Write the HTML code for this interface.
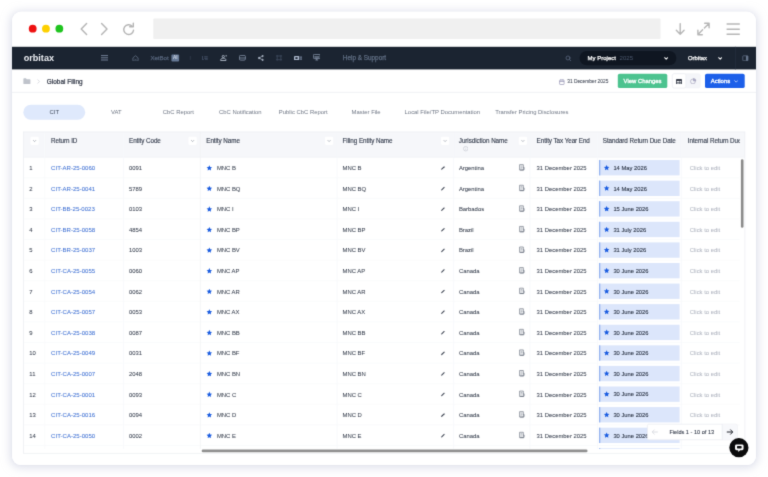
<!DOCTYPE html>
<html lang="en">
<head>
<meta charset="utf-8">
<title>Orbitax Global Filing</title>
<style>
*{box-sizing:border-box;margin:0;padding:0}
html,body{width:768px;height:477px;overflow:hidden;background:#fff;font-family:"Liberation Sans",sans-serif}
body{position:relative;filter:url(#soft)}
#root{position:absolute;left:0;top:0;width:768px;height:477px}
.abs{position:absolute}
.shadow{position:absolute;left:12px;top:12px;width:744px;height:453px;border-radius:9px;background:#fff;box-shadow:0 0 0 0.5px rgba(225,227,238,.5),0 1px 9px 2px rgba(192,196,218,.5)}
#bg{position:absolute;left:0;top:0;width:768px;height:477px}
.logo{position:absolute;left:23.7px;top:53.1px;font-size:9.1px;font-weight:bold;color:#eef0f4;line-height:11px}
.navtxt{position:absolute;color:#5f6d82;font-size:6.3px;line-height:8px;white-space:nowrap;-webkit-text-stroke:0.25px currentColor}
.t{position:absolute;white-space:nowrap;line-height:8px;font-size:6.4px;color:#2b3342}
.tabs{position:absolute;left:23.3px;top:104.8px;height:15px;display:flex}
.tab{min-width:62px;padding:0 7.5px;height:15px;line-height:15px;text-align:center;font-size:5.9px;color:#6e7684;white-space:nowrap}
.tab.on{color:#3f4a5c}
#tblin{position:absolute;left:0;top:0;width:768px;height:477px;clip-path:inset(132px 28.200px 28px 23.600px)}
.h{position:absolute;top:137px;font-size:6.3px;letter-spacing:-0.07px;line-height:8px;color:#363e4e;white-space:nowrap;-webkit-text-stroke:0.14px #363e4e}
.row{position:absolute;left:0;width:768px;height:20.585px}
.c{position:absolute;top:6.6px;font-size:5.9px;line-height:8px;color:#363e4d;white-space:nowrap;-webkit-text-stroke:0.05px currentColor}
.idx{left:29.3px}
.rid{left:51.1px;color:#4172d4;font-size:6.05px}
.code{left:129px}
.en{left:216.9px}
.fen{left:342.5px}
.jur{left:458.9px}
.tye{left:536.5px}
.dd{left:613.4px;top:6.5px;font-size:5.8px;color:#2b3445;-webkit-text-stroke:0.1px #2b3445}
.cte{left:689.8px;color:#b2b7c2}
</style>
</head>
<body>
<svg width="0" height="0" style="position:absolute"><filter id="soft" x="0" y="0" width="100%" height="100%" color-interpolation-filters="sRGB"><feConvolveMatrix order="3" kernelMatrix="0.0156 0.0938 0.0156 0.0938 0.5625 0.0938 0.0156 0.0938 0.0156" edgeMode="duplicate" preserveAlpha="true"/></filter></svg>
<div id="root">
<div class="shadow"></div>
<svg id="bg" viewBox="0 0 768 477">
<rect x="12" y="11.6" width="744" height="453.5" fill="#fff" rx="9"/>
<rect x="153.3" y="18.6" width="507.2" height="20.4" fill="#f0f0f0" rx="0.8"/>
<circle cx="32.7" cy="28.700" r="3.900" fill="#ee1111"/>
<circle cx="45.95" cy="28.700" r="3.900" fill="#fdd000"/>
<circle cx="59.35" cy="28.700" r="3.900" fill="#1fc41f"/>
<rect x="12" y="46.8" width="744" height="22.6" fill="#1b2431"/>
<rect x="579.5" y="50.9" width="96.9" height="14.4" fill="#0f1621" rx="7.2"/>
<rect x="171.4" y="54.4" width="7.7" height="7.2" fill="#667996" rx="1"/>
<path d="M190.3 56V59.8" stroke="#323e50" stroke-width="0.7"/>
<path d="M735.4 46.8V69.4" stroke="#263141" stroke-width="0.7"/>
<path d="M12 92.4H756" stroke="#eceef2" stroke-width="0.8"/>
<rect x="617.8" y="73.7" width="49.5" height="14.4" fill="#4cc38f" rx="1.9"/>
<rect x="672.3" y="73.7" width="28" height="14.3" fill="#f4f5f9" rx="1.9" stroke="#f0f1f5" stroke-width="0.500"/>
<rect x="672.3" y="73.7" width="13.6" height="14.3" fill="#fff" rx="1.9" stroke="#e9ebf0" stroke-width="0.600"/>
<rect x="705" y="73.7" width="39.7" height="14.4" fill="#1c5fe9" rx="1.9"/>
<rect x="23.3" y="104.8" width="61.9" height="15" fill="#dfe9fc" rx="7.5"/>
<clipPath id="tc"><rect x="23.600" y="132" width="716.200" height="317"/></clipPath>
<rect x="23.6" y="132" width="721.4" height="25.3" fill="#f6f7fa"/>
<path d="M23.6 157.4H745" stroke="#f0f1f5" stroke-width="0.6"/>
<g clip-path="url(#tc)">
<path d="M23.6 177.84H739.8" stroke="#f7f8fa" stroke-width="0.6"/>
<path d="M23.6 198.42H739.8" stroke="#f7f8fa" stroke-width="0.6"/>
<path d="M23.6 219H739.8" stroke="#f7f8fa" stroke-width="0.6"/>
<path d="M23.6 239.59H739.8" stroke="#f7f8fa" stroke-width="0.6"/>
<path d="M23.6 260.18H739.8" stroke="#f7f8fa" stroke-width="0.6"/>
<path d="M23.6 280.76H739.8" stroke="#f7f8fa" stroke-width="0.6"/>
<path d="M23.6 301.34H739.8" stroke="#f7f8fa" stroke-width="0.6"/>
<path d="M23.6 321.93H739.8" stroke="#f7f8fa" stroke-width="0.6"/>
<path d="M23.6 342.52H739.8" stroke="#f7f8fa" stroke-width="0.6"/>
<path d="M23.6 363.1H739.8" stroke="#f7f8fa" stroke-width="0.6"/>
<path d="M23.6 383.69H739.8" stroke="#f7f8fa" stroke-width="0.6"/>
<path d="M23.6 404.27H739.8" stroke="#f7f8fa" stroke-width="0.6"/>
<path d="M23.6 424.86H739.8" stroke="#f7f8fa" stroke-width="0.6"/>
<path d="M23.6 445.44H739.8" stroke="#f7f8fa" stroke-width="0.6"/>
<path d="M23.6 466.03H739.8" stroke="#f7f8fa" stroke-width="0.6"/>
<path d="M44.7 132V453.2" stroke="#f8f9fb" stroke-width="0.7"/>
<path d="M123.5 132V453.2" stroke="#f7f8fa" stroke-width="0.7"/>
<path d="M200.4 132V453.2" stroke="#f0f2f5" stroke-width="0.7"/>
<path d="M337.1 132V453.2" stroke="#f7f8fa" stroke-width="0.7"/>
<path d="M453.6 132V453.2" stroke="#f7f8fa" stroke-width="0.7"/>
<path d="M529.9 132V453.2" stroke="#f7f8fa" stroke-width="0.7"/>
<path d="M597.5 132V453.2" stroke="#f7f8fa" stroke-width="0.7"/>
<path d="M681.4 132V453.2" stroke="#f7f8fa" stroke-width="0.7"/>
<rect x="30.5" y="136.7" width="8.2" height="8.2" fill="#fff" rx="1.3"/>
<path d="M33.1 140.1l1.500 1.500 1.500-1.500" fill="none" stroke="#7d8492" stroke-width="0.550"/>
<rect x="188.5" y="136.7" width="8.2" height="8.2" fill="#fff" rx="1.3"/>
<path d="M191.1 140.1l1.500 1.500 1.500-1.500" fill="none" stroke="#7d8492" stroke-width="0.550"/>
<rect x="325" y="136.7" width="8.2" height="8.2" fill="#fff" rx="1.3"/>
<path d="M327.6 140.1l1.500 1.500 1.500-1.500" fill="none" stroke="#7d8492" stroke-width="0.550"/>
<rect x="441" y="136.7" width="8.2" height="8.2" fill="#fff" rx="1.3"/>
<path d="M443.6 140.1l1.500 1.500 1.500-1.500" fill="none" stroke="#7d8492" stroke-width="0.550"/>
<rect x="518.8" y="136.7" width="8.2" height="8.2" fill="#fff" rx="1.3"/>
<path d="M521.4 140.1l1.500 1.500 1.500-1.500" fill="none" stroke="#7d8492" stroke-width="0.550"/>
<rect x="599" y="160.05" width="80.6" height="15.35" fill="#dce6fb"/>
<rect x="599" y="160.05" width="1.3" height="15.35" fill="#94b3ef"/>
<path transform="translate(603.4 164.4) scale(0.27)" d="M12 1.800l3.100 6.600 7.100.900-5.200 5 1.300 7.100L12 17.900l-6.300 3.500 1.300-7.100-5.200-5 7.100-.900z" fill="#1a5ce0"/>
<path transform="translate(206.1 164.7) scale(0.27)" d="M12 1.800l3.100 6.600 7.100.900-5.200 5 1.300 7.100L12 17.900l-6.300 3.500 1.300-7.100-5.200-5 7.100-.900z" fill="#1a5ce0"/>
<path transform="translate(440.9 165.95) scale(0.17)" d="M1 23l1.500-6L17 2.500a2.500 2.500 0 0 1 3.500 0l1 1a2.500 2.500 0 0 1 0 3.500L7 21.500z" fill="#3d4452"/>
<g transform="translate(518.5 163.95) scale(0.275 0.283)" fill="none"><path d="M4 2.500h13.500v19H4z M17.500 12h3v7.500a2 2 0 0 1-2 2H6" stroke="#5f6776" stroke-width="2.200"/><path d="M7.500 7.500h6.500M7.500 12h6.500M7.500 16.500h4" stroke="#737a89" stroke-width="1.900"/></g>
<rect x="599" y="180.64" width="80.6" height="15.35" fill="#dce6fb"/>
<rect x="599" y="180.64" width="1.3" height="15.35" fill="#94b3ef"/>
<path transform="translate(603.4 184.99) scale(0.27)" d="M12 1.800l3.100 6.600 7.100.900-5.200 5 1.300 7.100L12 17.900l-6.300 3.500 1.300-7.100-5.200-5 7.100-.900z" fill="#1a5ce0"/>
<path transform="translate(206.1 185.29) scale(0.27)" d="M12 1.800l3.100 6.600 7.100.900-5.200 5 1.300 7.100L12 17.900l-6.300 3.500 1.300-7.100-5.200-5 7.100-.900z" fill="#1a5ce0"/>
<path transform="translate(440.9 186.54) scale(0.17)" d="M1 23l1.500-6L17 2.500a2.500 2.500 0 0 1 3.500 0l1 1a2.500 2.500 0 0 1 0 3.500L7 21.500z" fill="#3d4452"/>
<g transform="translate(518.5 184.54) scale(0.275 0.283)" fill="none"><path d="M4 2.500h13.500v19H4z M17.500 12h3v7.500a2 2 0 0 1-2 2H6" stroke="#5f6776" stroke-width="2.200"/><path d="M7.500 7.500h6.500M7.500 12h6.500M7.500 16.500h4" stroke="#737a89" stroke-width="1.900"/></g>
<rect x="599" y="201.22" width="80.6" height="15.35" fill="#dce6fb"/>
<rect x="599" y="201.22" width="1.3" height="15.35" fill="#94b3ef"/>
<path transform="translate(603.4 205.57) scale(0.27)" d="M12 1.800l3.100 6.600 7.100.900-5.200 5 1.300 7.100L12 17.900l-6.300 3.500 1.300-7.100-5.200-5 7.100-.900z" fill="#1a5ce0"/>
<path transform="translate(206.1 205.87) scale(0.27)" d="M12 1.800l3.100 6.600 7.100.900-5.200 5 1.300 7.100L12 17.900l-6.300 3.500 1.300-7.100-5.200-5 7.100-.900z" fill="#1a5ce0"/>
<path transform="translate(440.9 207.12) scale(0.17)" d="M1 23l1.500-6L17 2.500a2.500 2.500 0 0 1 3.500 0l1 1a2.500 2.500 0 0 1 0 3.500L7 21.500z" fill="#3d4452"/>
<g transform="translate(518.5 205.12) scale(0.275 0.283)" fill="none"><path d="M4 2.500h13.500v19H4z M17.500 12h3v7.500a2 2 0 0 1-2 2H6" stroke="#5f6776" stroke-width="2.200"/><path d="M7.500 7.500h6.500M7.500 12h6.500M7.500 16.500h4" stroke="#737a89" stroke-width="1.900"/></g>
<rect x="599" y="221.81" width="80.6" height="15.35" fill="#dce6fb"/>
<rect x="599" y="221.81" width="1.3" height="15.35" fill="#94b3ef"/>
<path transform="translate(603.4 226.16) scale(0.27)" d="M12 1.800l3.100 6.600 7.100.900-5.200 5 1.300 7.100L12 17.900l-6.300 3.500 1.300-7.100-5.200-5 7.100-.900z" fill="#1a5ce0"/>
<path transform="translate(206.1 226.46) scale(0.27)" d="M12 1.800l3.100 6.600 7.100.900-5.200 5 1.300 7.100L12 17.900l-6.300 3.500 1.300-7.100-5.200-5 7.100-.900z" fill="#1a5ce0"/>
<path transform="translate(440.9 227.71) scale(0.17)" d="M1 23l1.500-6L17 2.500a2.500 2.500 0 0 1 3.500 0l1 1a2.500 2.500 0 0 1 0 3.500L7 21.500z" fill="#3d4452"/>
<g transform="translate(518.5 225.71) scale(0.275 0.283)" fill="none"><path d="M4 2.500h13.500v19H4z M17.500 12h3v7.500a2 2 0 0 1-2 2H6" stroke="#5f6776" stroke-width="2.200"/><path d="M7.500 7.500h6.500M7.500 12h6.500M7.500 16.500h4" stroke="#737a89" stroke-width="1.900"/></g>
<rect x="599" y="242.39" width="80.6" height="15.35" fill="#dce6fb"/>
<rect x="599" y="242.39" width="1.3" height="15.35" fill="#94b3ef"/>
<path transform="translate(603.4 246.74) scale(0.27)" d="M12 1.800l3.100 6.600 7.100.900-5.200 5 1.300 7.100L12 17.900l-6.300 3.500 1.300-7.100-5.200-5 7.100-.900z" fill="#1a5ce0"/>
<path transform="translate(206.1 247.04) scale(0.27)" d="M12 1.800l3.100 6.600 7.100.900-5.200 5 1.300 7.100L12 17.900l-6.300 3.500 1.300-7.100-5.200-5 7.100-.900z" fill="#1a5ce0"/>
<path transform="translate(440.9 248.29) scale(0.17)" d="M1 23l1.500-6L17 2.500a2.500 2.500 0 0 1 3.500 0l1 1a2.500 2.500 0 0 1 0 3.500L7 21.500z" fill="#3d4452"/>
<g transform="translate(518.5 246.29) scale(0.275 0.283)" fill="none"><path d="M4 2.500h13.500v19H4z M17.500 12h3v7.500a2 2 0 0 1-2 2H6" stroke="#5f6776" stroke-width="2.200"/><path d="M7.500 7.500h6.500M7.500 12h6.500M7.500 16.500h4" stroke="#737a89" stroke-width="1.900"/></g>
<rect x="599" y="262.98" width="80.6" height="15.35" fill="#dce6fb"/>
<rect x="599" y="262.98" width="1.3" height="15.35" fill="#94b3ef"/>
<path transform="translate(603.4 267.33) scale(0.27)" d="M12 1.800l3.100 6.600 7.100.900-5.200 5 1.300 7.100L12 17.900l-6.300 3.500 1.300-7.100-5.200-5 7.100-.900z" fill="#1a5ce0"/>
<path transform="translate(206.1 267.62) scale(0.27)" d="M12 1.800l3.100 6.600 7.100.900-5.200 5 1.300 7.100L12 17.900l-6.300 3.500 1.300-7.100-5.200-5 7.100-.900z" fill="#1a5ce0"/>
<path transform="translate(440.9 268.88) scale(0.17)" d="M1 23l1.500-6L17 2.500a2.500 2.500 0 0 1 3.500 0l1 1a2.500 2.500 0 0 1 0 3.500L7 21.500z" fill="#3d4452"/>
<g transform="translate(518.5 266.88) scale(0.275 0.283)" fill="none"><path d="M4 2.500h13.500v19H4z M17.500 12h3v7.500a2 2 0 0 1-2 2H6" stroke="#5f6776" stroke-width="2.200"/><path d="M7.500 7.500h6.500M7.500 12h6.500M7.500 16.500h4" stroke="#737a89" stroke-width="1.900"/></g>
<rect x="599" y="283.56" width="80.6" height="15.35" fill="#dce6fb"/>
<rect x="599" y="283.56" width="1.3" height="15.35" fill="#94b3ef"/>
<path transform="translate(603.4 287.91) scale(0.27)" d="M12 1.800l3.100 6.600 7.100.900-5.200 5 1.300 7.100L12 17.900l-6.300 3.500 1.300-7.100-5.200-5 7.100-.900z" fill="#1a5ce0"/>
<path transform="translate(206.1 288.21) scale(0.27)" d="M12 1.800l3.100 6.600 7.100.900-5.200 5 1.300 7.100L12 17.900l-6.300 3.500 1.300-7.100-5.200-5 7.100-.900z" fill="#1a5ce0"/>
<path transform="translate(440.9 289.46) scale(0.17)" d="M1 23l1.500-6L17 2.500a2.500 2.500 0 0 1 3.500 0l1 1a2.500 2.500 0 0 1 0 3.500L7 21.500z" fill="#3d4452"/>
<g transform="translate(518.5 287.46) scale(0.275 0.283)" fill="none"><path d="M4 2.500h13.500v19H4z M17.500 12h3v7.500a2 2 0 0 1-2 2H6" stroke="#5f6776" stroke-width="2.200"/><path d="M7.500 7.500h6.500M7.500 12h6.500M7.500 16.500h4" stroke="#737a89" stroke-width="1.900"/></g>
<rect x="599" y="304.14" width="80.6" height="15.35" fill="#dce6fb"/>
<rect x="599" y="304.14" width="1.3" height="15.35" fill="#94b3ef"/>
<path transform="translate(603.4 308.5) scale(0.27)" d="M12 1.800l3.100 6.600 7.100.900-5.200 5 1.300 7.100L12 17.900l-6.300 3.500 1.300-7.100-5.200-5 7.100-.900z" fill="#1a5ce0"/>
<path transform="translate(206.1 308.79) scale(0.27)" d="M12 1.800l3.100 6.600 7.100.900-5.200 5 1.300 7.100L12 17.900l-6.300 3.500 1.300-7.100-5.200-5 7.100-.900z" fill="#1a5ce0"/>
<path transform="translate(440.9 310.04) scale(0.17)" d="M1 23l1.500-6L17 2.500a2.500 2.500 0 0 1 3.500 0l1 1a2.500 2.500 0 0 1 0 3.500L7 21.500z" fill="#3d4452"/>
<g transform="translate(518.5 308.04) scale(0.275 0.283)" fill="none"><path d="M4 2.500h13.500v19H4z M17.500 12h3v7.500a2 2 0 0 1-2 2H6" stroke="#5f6776" stroke-width="2.200"/><path d="M7.500 7.500h6.500M7.500 12h6.500M7.500 16.500h4" stroke="#737a89" stroke-width="1.900"/></g>
<rect x="599" y="324.73" width="80.6" height="15.35" fill="#dce6fb"/>
<rect x="599" y="324.73" width="1.3" height="15.35" fill="#94b3ef"/>
<path transform="translate(603.4 329.08) scale(0.27)" d="M12 1.800l3.100 6.600 7.100.900-5.200 5 1.300 7.100L12 17.900l-6.300 3.500 1.300-7.100-5.200-5 7.100-.900z" fill="#1a5ce0"/>
<path transform="translate(206.1 329.38) scale(0.27)" d="M12 1.800l3.100 6.600 7.100.900-5.200 5 1.300 7.100L12 17.900l-6.300 3.500 1.300-7.100-5.200-5 7.100-.900z" fill="#1a5ce0"/>
<path transform="translate(440.9 330.63) scale(0.17)" d="M1 23l1.500-6L17 2.500a2.500 2.500 0 0 1 3.500 0l1 1a2.500 2.500 0 0 1 0 3.500L7 21.500z" fill="#3d4452"/>
<g transform="translate(518.5 328.63) scale(0.275 0.283)" fill="none"><path d="M4 2.500h13.500v19H4z M17.500 12h3v7.500a2 2 0 0 1-2 2H6" stroke="#5f6776" stroke-width="2.200"/><path d="M7.500 7.500h6.500M7.500 12h6.500M7.500 16.500h4" stroke="#737a89" stroke-width="1.900"/></g>
<rect x="599" y="345.32" width="80.6" height="15.35" fill="#dce6fb"/>
<rect x="599" y="345.32" width="1.3" height="15.35" fill="#94b3ef"/>
<path transform="translate(603.4 349.67) scale(0.27)" d="M12 1.800l3.100 6.600 7.100.900-5.200 5 1.300 7.100L12 17.900l-6.300 3.500 1.300-7.100-5.200-5 7.100-.900z" fill="#1a5ce0"/>
<path transform="translate(206.1 349.97) scale(0.27)" d="M12 1.800l3.100 6.600 7.100.900-5.200 5 1.300 7.100L12 17.900l-6.300 3.500 1.300-7.100-5.200-5 7.100-.900z" fill="#1a5ce0"/>
<path transform="translate(440.9 351.22) scale(0.17)" d="M1 23l1.500-6L17 2.500a2.500 2.500 0 0 1 3.500 0l1 1a2.500 2.500 0 0 1 0 3.500L7 21.500z" fill="#3d4452"/>
<g transform="translate(518.5 349.22) scale(0.275 0.283)" fill="none"><path d="M4 2.500h13.500v19H4z M17.500 12h3v7.500a2 2 0 0 1-2 2H6" stroke="#5f6776" stroke-width="2.200"/><path d="M7.500 7.500h6.500M7.500 12h6.500M7.500 16.500h4" stroke="#737a89" stroke-width="1.900"/></g>
<rect x="599" y="365.9" width="80.6" height="15.35" fill="#dce6fb"/>
<rect x="599" y="365.9" width="1.3" height="15.35" fill="#94b3ef"/>
<path transform="translate(603.4 370.25) scale(0.27)" d="M12 1.800l3.100 6.600 7.100.900-5.200 5 1.300 7.100L12 17.900l-6.300 3.500 1.300-7.100-5.200-5 7.100-.900z" fill="#1a5ce0"/>
<path transform="translate(206.1 370.55) scale(0.27)" d="M12 1.800l3.100 6.600 7.100.900-5.200 5 1.300 7.100L12 17.900l-6.300 3.500 1.300-7.100-5.200-5 7.100-.900z" fill="#1a5ce0"/>
<path transform="translate(440.9 371.8) scale(0.17)" d="M1 23l1.500-6L17 2.500a2.500 2.500 0 0 1 3.500 0l1 1a2.500 2.500 0 0 1 0 3.500L7 21.500z" fill="#3d4452"/>
<g transform="translate(518.5 369.8) scale(0.275 0.283)" fill="none"><path d="M4 2.500h13.500v19H4z M17.500 12h3v7.500a2 2 0 0 1-2 2H6" stroke="#5f6776" stroke-width="2.200"/><path d="M7.500 7.500h6.500M7.500 12h6.500M7.500 16.500h4" stroke="#737a89" stroke-width="1.900"/></g>
<rect x="599" y="386.49" width="80.6" height="15.35" fill="#dce6fb"/>
<rect x="599" y="386.49" width="1.3" height="15.35" fill="#94b3ef"/>
<path transform="translate(603.4 390.84) scale(0.27)" d="M12 1.800l3.100 6.600 7.100.900-5.200 5 1.300 7.100L12 17.900l-6.300 3.500 1.300-7.100-5.200-5 7.100-.900z" fill="#1a5ce0"/>
<path transform="translate(206.1 391.13) scale(0.27)" d="M12 1.800l3.100 6.600 7.100.900-5.200 5 1.300 7.100L12 17.900l-6.300 3.500 1.300-7.100-5.200-5 7.100-.900z" fill="#1a5ce0"/>
<path transform="translate(440.9 392.38) scale(0.17)" d="M1 23l1.500-6L17 2.500a2.500 2.500 0 0 1 3.500 0l1 1a2.500 2.500 0 0 1 0 3.500L7 21.500z" fill="#3d4452"/>
<g transform="translate(518.5 390.38) scale(0.275 0.283)" fill="none"><path d="M4 2.500h13.500v19H4z M17.500 12h3v7.500a2 2 0 0 1-2 2H6" stroke="#5f6776" stroke-width="2.200"/><path d="M7.500 7.500h6.500M7.500 12h6.500M7.500 16.500h4" stroke="#737a89" stroke-width="1.900"/></g>
<rect x="599" y="407.07" width="80.6" height="15.35" fill="#dce6fb"/>
<rect x="599" y="407.07" width="1.3" height="15.35" fill="#94b3ef"/>
<path transform="translate(603.4 411.42) scale(0.27)" d="M12 1.800l3.100 6.600 7.100.900-5.200 5 1.300 7.100L12 17.900l-6.300 3.500 1.300-7.100-5.200-5 7.100-.900z" fill="#1a5ce0"/>
<path transform="translate(206.1 411.72) scale(0.27)" d="M12 1.800l3.100 6.600 7.100.900-5.200 5 1.300 7.100L12 17.900l-6.300 3.500 1.300-7.100-5.200-5 7.100-.900z" fill="#1a5ce0"/>
<path transform="translate(440.9 412.97) scale(0.17)" d="M1 23l1.500-6L17 2.500a2.500 2.500 0 0 1 3.500 0l1 1a2.500 2.500 0 0 1 0 3.500L7 21.500z" fill="#3d4452"/>
<g transform="translate(518.5 410.97) scale(0.275 0.283)" fill="none"><path d="M4 2.500h13.500v19H4z M17.500 12h3v7.500a2 2 0 0 1-2 2H6" stroke="#5f6776" stroke-width="2.200"/><path d="M7.500 7.500h6.500M7.500 12h6.500M7.500 16.500h4" stroke="#737a89" stroke-width="1.900"/></g>
<rect x="599" y="427.66" width="80.6" height="15.35" fill="#dce6fb"/>
<rect x="599" y="427.66" width="1.3" height="15.35" fill="#94b3ef"/>
<path transform="translate(603.4 432.01) scale(0.27)" d="M12 1.800l3.100 6.600 7.100.900-5.200 5 1.300 7.100L12 17.900l-6.300 3.500 1.300-7.100-5.200-5 7.100-.900z" fill="#1a5ce0"/>
<path transform="translate(206.1 432.31) scale(0.27)" d="M12 1.800l3.100 6.600 7.100.900-5.200 5 1.300 7.100L12 17.900l-6.300 3.500 1.300-7.100-5.200-5 7.100-.900z" fill="#1a5ce0"/>
<path transform="translate(440.9 433.56) scale(0.17)" d="M1 23l1.500-6L17 2.500a2.500 2.500 0 0 1 3.500 0l1 1a2.500 2.500 0 0 1 0 3.500L7 21.500z" fill="#3d4452"/>
<g transform="translate(518.5 431.56) scale(0.275 0.283)" fill="none"><path d="M4 2.500h13.500v19H4z M17.500 12h3v7.500a2 2 0 0 1-2 2H6" stroke="#5f6776" stroke-width="2.200"/><path d="M7.500 7.500h6.500M7.500 12h6.500M7.500 16.500h4" stroke="#737a89" stroke-width="1.900"/></g>
<rect x="599" y="448.24" width="80.6" height="15.35" fill="#dce6fb"/>
<rect x="599" y="448.24" width="1.3" height="15.35" fill="#94b3ef"/>
<path transform="translate(603.4 452.59) scale(0.27)" d="M12 1.800l3.100 6.600 7.100.900-5.200 5 1.300 7.100L12 17.900l-6.300 3.500 1.300-7.100-5.200-5 7.100-.900z" fill="#1a5ce0"/>
<path transform="translate(206.1 452.89) scale(0.27)" d="M12 1.800l3.100 6.600 7.100.900-5.200 5 1.300 7.100L12 17.900l-6.300 3.500 1.300-7.100-5.200-5 7.100-.900z" fill="#1a5ce0"/>
<path transform="translate(440.9 454.14) scale(0.17)" d="M1 23l1.500-6L17 2.500a2.500 2.500 0 0 1 3.500 0l1 1a2.500 2.500 0 0 1 0 3.500L7 21.500z" fill="#3d4452"/>
<g transform="translate(518.5 452.14) scale(0.275 0.283)" fill="none"><path d="M4 2.500h13.500v19H4z M17.500 12h3v7.500a2 2 0 0 1-2 2H6" stroke="#5f6776" stroke-width="2.200"/><path d="M7.500 7.500h6.500M7.500 12h6.500M7.500 16.500h4" stroke="#737a89" stroke-width="1.900"/></g>
</g>
<rect x="23.5" y="131.9" width="721.4" height="321.4" fill="none" stroke="#edeff3" stroke-width="0.800"/>
<rect x="201.7" y="449.5" width="385.8" height="2.7" fill="#8f8f8f" rx="1.3"/>
<rect x="740.9" y="159.3" width="2.6" height="68.5" fill="#8a8a8a" rx="1.3"/>
</svg>

<!-- title bar icons -->
<svg class="abs" style="left:78px;top:20.500px;width:64px;height:16px" viewBox="0 0 64 16" fill="none" stroke="#b4b4b4" stroke-width="1.400" stroke-linecap="round" stroke-linejoin="round">
  <path d="M8.600 2.600L3.200 8l5.400 5.400"/>
  <path d="M23.600 2.600L29 8l-5.400 5.400"/>
  <path d="M54.200 5.200A4.900 4.900 0 1 0 55.500 9.300"/>
  <path d="M55.300 2.200v3.600h-3.600"/>
</svg>
<svg class="abs" style="left:672px;top:20.500px;width:72px;height:16px" viewBox="0 0 72 16" fill="none" stroke="#b6b6b6" stroke-width="1.400" stroke-linecap="round" stroke-linejoin="round">
  <path d="M8.200 2.600v10.600M4.300 9.300l3.900 4 3.900-4"/>
  <path d="M32.400 7l4.600-4.600M32.700 2.300h4.400v4.400M30.600 8.800l-4.600 4.600M25.900 9.300v4.400h4.400"/>
  <path d="M54.600 3h13.200M54.600 8.200h13.200M54.600 13.300h13.200" stroke-width="1.600" stroke-linecap="butt"/>
</svg>

<!-- nav -->
<div class="logo">orbitax</div>
<svg class="abs" style="left:100.500px;top:55.200px;width:7.400px;height:5.600px" viewBox="0 0 7.400 5.600" stroke="#76839a" stroke-width="0.950" fill="none"><path d="M0 .6h7.400M0 2.800h7.400M0 5h7.400"/></svg>
<svg class="abs" style="left:132px;top:54.600px;width:7px;height:6.600px" viewBox="0 0 24 23" fill="none" stroke="#66748a" stroke-width="2.600" stroke-linejoin="round"><path d="M3 10L12 2.500l9 7.500v9.500a1.500 1.500 0 0 1-1.500 1.500h-15A1.500 1.500 0 0 1 3 19.500z"/><path d="M8.500 14.500q3.500 3 7 0" stroke-width="2.200"/></svg>
<div class="navtxt" style="left:150.400px;top:54.100px;color:#55637a;font-size:6.100px">XetBot</div>
<div class="abs" style="left:171.400px;top:54.400px;width:7.700px;height:7.200px;color:#c9d2e0;font-size:4.600px;font-weight:bold;line-height:7.200px;text-align:center">AI</div>
<svg class="abs" style="left:202.400px;top:55.500px;width:5.800px;height:4.700px" viewBox="0 0 58 47" fill="none" stroke="#4a576d" stroke-width="8"><path d="M4 0v38h16M22 8h36M22 23h36M30 38h28"/></svg>
<svg class="abs" style="left:219.900px;top:54.900px;width:7.200px;height:5.900px" viewBox="0 0 72 59" fill="none" stroke="#b0bac9" stroke-width="9"><circle cx="33" cy="15" r="11"/><path d="M6 55c0-16 10-23 27-23s27 7 27 23z"/><path d="M55 8h14M62 1v14" stroke-width="6"/></svg>
<svg class="abs" style="left:238.900px;top:55px;width:6.800px;height:5.500px" viewBox="0 0 68 55" fill="none" stroke="#8896ab" stroke-width="8"><rect x="4" y="4" width="60" height="47" rx="12"/><path d="M4 30h60"/></svg>
<svg class="abs" style="left:258px;top:54.900px;width:5.800px;height:5.900px" viewBox="0 0 58 59" fill="#b0bac9" stroke="#b0bac9" stroke-width="7"><circle cx="11" cy="30" r="8"/><circle cx="46" cy="10" r="7"/><circle cx="46" cy="49" r="7"/><path d="M11 30L46 10M11 30L46 49" fill="none"/></svg>
<svg class="abs" style="left:276px;top:55px;width:6.100px;height:5.700px" viewBox="0 0 61 57" fill="none" stroke="#3c485c" stroke-width="9"><path d="M12 0v57M49 0v57M0 10h61M0 47h61"/></svg>
<svg class="abs" style="left:293.800px;top:55.900px;width:8.300px;height:4.400px" viewBox="0 0 83 44" fill="#aab6ca"><rect x="0" y="0" width="52" height="44" rx="5"/><rect x="58" y="6" width="25" height="32" rx="4" fill="#6f7d95"/><rect x="14" y="12" width="22" height="18" fill="#1b2431"/><rect x="66" y="14" width="8" height="16" fill="#1b2431"/></svg>
<svg class="abs" style="left:312.600px;top:54.400px;width:7.500px;height:6.400px" viewBox="0 0 75 64" fill="none" stroke="#8896ab" stroke-width="8"><rect x="4" y="4" width="67" height="42" rx="9"/><path d="M14 30h47" stroke-width="12"/><path d="M24 60h27M37 46v14"/></svg>
<div class="navtxt" style="left:342.800px;top:54.100px;font-size:6.400px">Help &amp; Support</div>
<svg class="abs" style="left:565.400px;top:54.500px;width:6.800px;height:6.800px" viewBox="0 0 24 24" fill="none" stroke="#64718a" stroke-width="2.400" stroke-linecap="round"><circle cx="10.500" cy="10.500" r="7"/><path d="M16 16l6 6"/></svg>
<div class="navtxt" style="left:587.600px;top:54px;color:#fff;font-size:6px">My Project</div>
<div class="navtxt" style="left:619.600px;top:54.100px;color:#4b586e;-webkit-text-stroke:0;font-size:6.050px">2025</div>
<svg class="abs" style="left:663.800px;top:56.700px;width:4.400px;height:3.100px" viewBox="0 0 10 7" fill="none" stroke="#fff" stroke-width="2.300" stroke-linecap="round" stroke-linejoin="round"><path d="M1.500 1.500L5 5l3.500-3.500"/></svg>
<div class="navtxt" style="left:688px;top:54px;color:#fff;font-size:5.900px">Orbitax</div>
<svg class="abs" style="left:717.800px;top:56.700px;width:4.400px;height:3.100px" viewBox="0 0 10 7" fill="none" stroke="#fff" stroke-width="2.300" stroke-linecap="round" stroke-linejoin="round"><path d="M1.500 1.500L5 5l3.500-3.500"/></svg>
<svg class="abs" style="left:742.300px;top:54.700px;width:6.800px;height:6.600px" viewBox="0 0 24 24" fill="none" stroke="#66748a" stroke-width="2.600"><rect x="2.500" y="3" width="19" height="18" rx="2"/><rect x="14" y="3" width="7.500" height="18" fill="#66748a" stroke="none"/></svg>

<!-- breadcrumb bar -->
<svg class="abs" style="left:23.300px;top:77.900px;width:7.800px;height:6.400px" viewBox="0 0 24 20" fill="#bfc3cb"><path d="M1 3a2 2 0 0 1 2-2h6l2.500 3H21a2 2 0 0 1 2 2v11a2 2 0 0 1-2 2H3a2 2 0 0 1-2-2z"/></svg>
<svg class="abs" style="left:37.200px;top:79.100px;width:3px;height:5px" viewBox="0 0 6 10" fill="none" stroke="#c9ccd3" stroke-width="1.300"><path d="M1 1l4 4-4 4"/></svg>
<div class="t" style="left:46.800px;top:77.500px;font-size:6.450px;color:#2a3140;-webkit-text-stroke:0.200px #2a3140">Global Filing</div>
<svg class="abs" style="left:559.300px;top:78.700px;width:5.700px;height:6px" viewBox="0 0 22 24" fill="none" stroke="#8583a8" stroke-width="2.400"><rect x="2" y="4" width="18" height="18" rx="2.500"/><path d="M2 10h18M7 1v5M15 1v5"/></svg>
<div class="t" style="left:567.200px;top:77.900px;font-size:4.850px;color:#3b4251;-webkit-text-stroke:0.060px #3b4251">31 December 2025</div>
<div class="abs" style="left:617.800px;top:73.700px;width:49.500px;height:14.400px;color:#fff;font-size:5.900px;-webkit-text-stroke:0.300px #fff;line-height:14.400px;text-align:center">View Changes</div>
<svg class="abs" style="left:676.100px;top:78.600px;width:6px;height:5.400px" viewBox="0 0 60 54"><rect x="0" y="0" width="60" height="54" rx="8" fill="#3a3f4b"/><rect x="8" y="20" width="27" height="10" fill="#eceef2"/><rect x="41" y="20" width="11" height="10" fill="#eceef2"/><rect x="8" y="36" width="27" height="10" fill="#eceef2"/><rect x="41" y="36" width="11" height="10" fill="#eceef2"/></svg>
<svg class="abs" style="left:690.300px;top:77.900px;width:6.400px;height:6.400px" viewBox="0 0 24 24" fill="none" stroke="#9a98b4" stroke-width="2.200"><circle cx="11" cy="13" r="9"/><path d="M13 2a9 9 0 0 1 9 9h-9z" fill="#b4b3cf"/></svg>
<div class="t" style="left:710.800px;top:76.900px;font-size:5.900px;-webkit-text-stroke:0.300px #fff;color:#fff">Actions</div>
<svg class="abs" style="left:733.700px;top:79.700px;width:4.400px;height:3px" viewBox="0 0 10 7" fill="none" stroke="#fff" stroke-width="1.500" stroke-linecap="round" stroke-linejoin="round"><path d="M1.500 1.500L5 5l3.500-3.500"/></svg>

<!-- tabs -->
<div class="tabs">
  <div class="tab on">CIT</div><div class="tab">VAT</div><div class="tab">CbC Report</div><div class="tab">CbC Notification</div><div class="tab">Public CbC Report</div><div class="tab">Master File</div><div class="tab">Local File/TP Documentation</div><div class="tab">Transfer Pricing Disclosures</div>
</div>

<!-- table text -->
<div id="tblin">
<div class="row" style="top:157.55px"><span class="c idx">1</span><span class="c rid">CIT-AR-25-0060</span><span class="c code">0091</span><span class="c en">MNC B</span><span class="c fen">MNC B</span><span class="c jur">Argentina</span><span class="c tye">31 December 2025</span><span class="c dd">14 May 2026</span><span class="c cte">Click to edit</span></div>
<div class="row" style="top:178.14px"><span class="c idx">2</span><span class="c rid">CIT-AR-25-0041</span><span class="c code">5789</span><span class="c en">MNC BQ</span><span class="c fen">MNC BQ</span><span class="c jur">Argentina</span><span class="c tye">31 December 2025</span><span class="c dd">14 May 2026</span><span class="c cte">Click to edit</span></div>
<div class="row" style="top:198.72px"><span class="c idx">3</span><span class="c rid">CIT-BB-25-0023</span><span class="c code">0103</span><span class="c en">MNC I</span><span class="c fen">MNC I</span><span class="c jur">Barbados</span><span class="c tye">31 December 2025</span><span class="c dd">15 June 2026</span><span class="c cte">Click to edit</span></div>
<div class="row" style="top:219.31px"><span class="c idx">4</span><span class="c rid">CIT-BR-25-0058</span><span class="c code">4854</span><span class="c en">MNC BP</span><span class="c fen">MNC BP</span><span class="c jur">Brazil</span><span class="c tye">31 December 2025</span><span class="c dd">31 July 2026</span><span class="c cte">Click to edit</span></div>
<div class="row" style="top:239.89px"><span class="c idx">5</span><span class="c rid">CIT-BR-25-0037</span><span class="c code">1003</span><span class="c en">MNC BV</span><span class="c fen">MNC BV</span><span class="c jur">Brazil</span><span class="c tye">31 December 2025</span><span class="c dd">31 July 2026</span><span class="c cte">Click to edit</span></div>
<div class="row" style="top:260.48px"><span class="c idx">6</span><span class="c rid">CIT-CA-25-0055</span><span class="c code">0060</span><span class="c en">MNC AP</span><span class="c fen">MNC AP</span><span class="c jur">Canada</span><span class="c tye">31 December 2025</span><span class="c dd">30 June 2026</span><span class="c cte">Click to edit</span></div>
<div class="row" style="top:281.06px"><span class="c idx">7</span><span class="c rid">CIT-CA-25-0054</span><span class="c code">0062</span><span class="c en">MNC AR</span><span class="c fen">MNC AR</span><span class="c jur">Canada</span><span class="c tye">31 December 2025</span><span class="c dd">30 June 2026</span><span class="c cte">Click to edit</span></div>
<div class="row" style="top:301.64px"><span class="c idx">8</span><span class="c rid">CIT-CA-25-0057</span><span class="c code">0053</span><span class="c en">MNC AX</span><span class="c fen">MNC AX</span><span class="c jur">Canada</span><span class="c tye">31 December 2025</span><span class="c dd">30 June 2026</span><span class="c cte">Click to edit</span></div>
<div class="row" style="top:322.23px"><span class="c idx">9</span><span class="c rid">CIT-CA-25-0038</span><span class="c code">0087</span><span class="c en">MNC BB</span><span class="c fen">MNC BB</span><span class="c jur">Canada</span><span class="c tye">31 December 2025</span><span class="c dd">30 June 2026</span><span class="c cte">Click to edit</span></div>
<div class="row" style="top:342.82px"><span class="c idx">10</span><span class="c rid">CIT-CA-25-0049</span><span class="c code">0031</span><span class="c en">MNC BF</span><span class="c fen">MNC BF</span><span class="c jur">Canada</span><span class="c tye">31 December 2025</span><span class="c dd">30 June 2026</span><span class="c cte">Click to edit</span></div>
<div class="row" style="top:363.4px"><span class="c idx">11</span><span class="c rid">CIT-CA-25-0007</span><span class="c code">2048</span><span class="c en">MNC BN</span><span class="c fen">MNC BN</span><span class="c jur">Canada</span><span class="c tye">31 December 2025</span><span class="c dd">30 June 2026</span><span class="c cte">Click to edit</span></div>
<div class="row" style="top:383.99px"><span class="c idx">12</span><span class="c rid">CIT-CA-25-0001</span><span class="c code">0093</span><span class="c en">MNC C</span><span class="c fen">MNC C</span><span class="c jur">Canada</span><span class="c tye">31 December 2025</span><span class="c dd">30 June 2026</span><span class="c cte">Click to edit</span></div>
<div class="row" style="top:404.57px"><span class="c idx">13</span><span class="c rid">CIT-CA-25-0016</span><span class="c code">0094</span><span class="c en">MNC D</span><span class="c fen">MNC D</span><span class="c jur">Canada</span><span class="c tye">31 December 2025</span><span class="c dd">30 June 2026</span><span class="c cte">Click to edit</span></div>
<div class="row" style="top:425.16px"><span class="c idx">14</span><span class="c rid">CIT-CA-25-0050</span><span class="c code">0002</span><span class="c en">MNC E</span><span class="c fen">MNC E</span><span class="c jur">Canada</span><span class="c tye">31 December 2025</span><span class="c dd">30 June 2026</span><span class="c cte">Click to edit</span></div>
<div class="row" style="top:445.74px"><span class="c idx">15</span><span class="c rid">CIT-CA-25-0051</span><span class="c code">0003</span><span class="c en">MNC F</span><span class="c fen">MNC F</span><span class="c jur">Canada</span><span class="c tye">31 December 2025</span><span class="c dd">30 June 2026</span><span class="c cte">Click to edit</span></div>
  <div class="h" style="left:51px">Return ID</div>
  <div class="h" style="left:129px">Entity Code</div>
  <div class="h" style="left:206.300px">Entity Name</div>
  <div class="h" style="left:342.600px">Filing Entity Name</div>
  <div class="h" style="left:458.800px">Jurisdiction Name</div>
  <div class="h" style="left:536.600px">Entity Tax Year End</div>
  <div class="h" style="left:602.800px">Standard Return Due Date</div>
  <div class="h" style="left:687.800px">Internal Return Due Date</div>
  <svg class="abs" style="left:463px;top:146.400px;width:5.400px;height:5.400px" viewBox="0 0 24 24" fill="none" stroke="#b3b8c2" stroke-width="2"><circle cx="12" cy="12" r="10"/><path d="M12 11v6M12 7v1.500"/></svg>
</div>

<!-- pagination -->
<svg class="abs" style="left:640px;top:418px;width:120px;height:45px" viewBox="640 418 120 45">
  <rect x="647.400" y="424.200" width="89.800" height="15.600" rx="1.500" fill="#fff" stroke="#e9ebf0" stroke-width="0.700"/>
  <path d="M722.200 424.500h13.500a1.200 1.200 0 0 1 1.200 1.200v12.600a1.200 1.200 0 0 1-1.200 1.200h-13.500z" fill="#f7f8fb"/>
  <path d="M722.200 424.200v15.600" stroke="#e9ebf0" stroke-width="0.700"/>
  <path d="M657.800 432h-5.600M654.600 429.600L652.200 432l2.400 2.400" fill="none" stroke="#d0d3da" stroke-width="0.750"/>
  <path d="M726.800 432h5.800M730.300 429.500l2.400 2.500-2.400 2.500" fill="none" stroke="#20242c" stroke-width="1"/>
  <circle cx="738.900" cy="447.700" r="9.600" fill="#0b0b0c"/>
  <g transform="translate(734.200 443.100) scale(0.425)" fill="#fff"><path d="M5.500 3h13A3.500 3.500 0 0 1 22 6.500v7a3.500 3.500 0 0 1-3.500 3.500H14l-4.500 4.200V17h-4A3.500 3.500 0 0 1 2 13.500v-7A3.500 3.500 0 0 1 5.500 3z"/><rect x="6.500" y="7" width="11" height="5.500" rx="1.500" fill="#0b0b0c"/></g>
</svg>
<div class="t" style="left:669.400px;top:428.200px;font-size:5.600px;color:#2f3746;-webkit-text-stroke:0.080px #2f3746">Fields 1 - 10 of 13</div>
</div>
</body>
</html>
